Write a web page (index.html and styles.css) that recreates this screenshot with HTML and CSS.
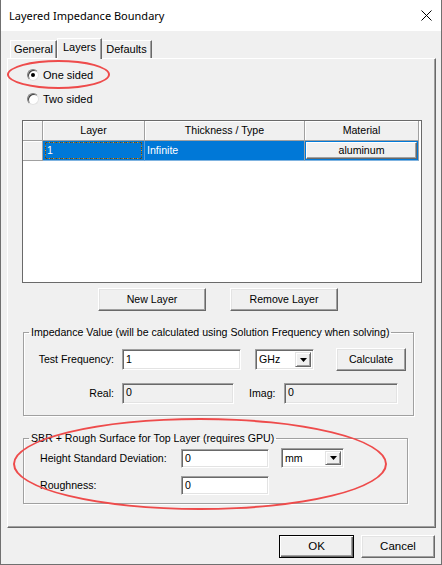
FILE: index.html
```html
<!DOCTYPE html>
<html>
<head>
<meta charset="utf-8">
<link rel="stylesheet" href="styles.css">
</head>
<body>
<div class="window">
  <div class="titlebar">
    <span class="title">Layered Impedance Boundary</span>
    <svg class="close" width="11" height="11" viewBox="0 0 11 11"><path d="M0.5 0.5 L10.5 10.5 M10.5 0.5 L0.5 10.5" stroke="#000" stroke-width="1" fill="none"/></svg>
  </div>
  <div class="client">
    <div class="tabs">
      <div class="tab t-general">General</div>
      <div class="tab t-layers active">Layers</div>
      <div class="tab t-defaults">Defaults</div>
    </div>
    <div class="panel">
      <div class="radios">
        <div class="radio"><span class="rb checked"></span><span>One sided</span></div>
        <div class="radio"><span class="rb"></span><span>Two sided</span></div>
      </div>
      <div class="grid">
        <div class="grow head">
          <div class="c rh"></div>
          <div class="c col1">Layer</div>
          <div class="c col2">Thickness / Type</div>
          <div class="c col3">Material</div>
        </div>
        <div class="grow sel">
          <div class="c rh"></div>
          <div class="c col1"><span class="focus">1</span></div>
          <div class="c col2">Infinite</div>
          <div class="c col3"><span class="cellbtn">aluminum</span></div>
        </div>
      </div>
      <div class="btnrow">
        <div class="btn b-layer">New Layer</div>
        <div class="btn b-layer">Remove Layer</div>
      </div>
      <fieldset class="group g1">
        <legend>Impedance Value (will be calculated using Solution Frequency when solving)</legend>
        <div class="frow r1">
          <span class="lbl">Test Frequency:</span>
          <div class="edit e-freq">1</div>
          <div class="select s-ghz"><span class="stext">GHz</span><span class="drop"><svg width="7" height="4" viewBox="0 0 7 4"><path d="M0 0 H7 L3.5 4 Z" fill="#000"/></svg></span></div>
          <div class="btn b-calc">Calculate</div>
        </div>
        <div class="frow r2">
          <span class="lbl">Real:</span>
          <div class="edit ro e-real">0</div>
          <span class="lbl2">Imag:</span>
          <div class="edit ro e-imag">0</div>
        </div>
      </fieldset>
      <fieldset class="group g2">
        <legend>SBR + Rough Surface for Top Layer (requires GPU)</legend>
        <div class="frow r3">
          <span class="lbl3">Height Standard Deviation:</span>
          <div class="edit e-small">0</div>
          <div class="select s-mm"><span class="stext">mm</span><span class="drop"><svg width="7" height="4" viewBox="0 0 7 4"><path d="M0 0 H7 L3.5 4 Z" fill="#000"/></svg></span></div>
        </div>
        <div class="frow r4">
          <span class="lbl3">Roughness:</span>
          <div class="edit e-small">0</div>
        </div>
      </fieldset>
      <div class="ellipse el1"></div>
      <div class="ellipse el2"></div>
    </div>
    <div class="footer">
      <div class="btn default b-ok">OK</div>
      <div class="btn b-cancel">Cancel</div>
    </div>
  </div>
</div>
</body>
</html>
```
FILE: styles.css
```css
* { box-sizing: border-box; }
html, body { margin: 0; padding: 0; background: #fff; }
body {
  font-family: "Liberation Sans", Arial, sans-serif;
  font-size: 10.6px;
  line-height: 13px;
  color: #000;
}
.window {
  width: 442px;
  height: 565px;
  border: 1px solid #707070;
  border-top: none;
  display: flex;
  flex-direction: column;
  background: #f0f0f0;
}
.titlebar {
  height: 31px;
  flex: none;
  background: #fff;
  display: flex;
  align-items: center;
  padding-left: 8px;
  padding-right: 9px;
}
.title {
  flex: 1;
  font-family: "Noto Sans", sans-serif;
  font-size: 11px;
  color: #000;
  margin-top: -1px;
}
.close { display: block; }

.client {
  flex: 1;
  display: flex;
  flex-direction: column;
  padding: 7px 5px 0 6px;
}
.tabs {
  display: flex;
  align-items: flex-end;
  height: 20px;
  margin-left: 3px;
  position: relative;
  z-index: 2;
  font-size: 11px;
}
.tab {
  height: 18px;
  background: #f0f0f0;
  border-top: 1px solid #fff;
  border-left: 1px solid #fff;
  border-right: 1px solid #696969;
  box-shadow: inset -1px 0 0 #a0a0a0;
  text-align: center;
  padding-top: 2px;
}
.t-general { width: 47px; }
.t-layers { width: 45px; }
.t-defaults { width: 50px; border-left: none; }
.tab.active {
  height: 21px;
  margin-bottom: -1px;
  padding-top: 2px;
}
.panel {
  height: 470px;
  flex: none;
  position: relative;
  border: 1px solid;
  border-color: #fff #696969 #696969 #fff;
  box-shadow: inset -1px -1px 0 #a0a0a0;
  padding: 0 0 0 14px;
}
.radios {
  padding-top: 8px;
  margin-left: 5px;
  display: flex;
  flex-direction: column;
  gap: 8px;
  font-size: 11px;
}
.radio {
  display: flex;
  align-items: center;
  height: 16px;
  gap: 4px;
}
.rb {
  width: 12px;
  height: 12px;
  border-radius: 50%;
  background: #fff;
  border: 1px solid;
  border-color: #808080 #e3e3e3 #e3e3e3 #808080;
  box-shadow: inset 1px 1px 0 #404040;
  display: flex;
  align-items: center;
  justify-content: center;
}
.rb.checked::after {
  content: "";
  width: 4px;
  height: 4px;
  border-radius: 50%;
  background: #000;
}

.grid {
  margin-top: 13px;
  width: 400px;
  height: 163px;
  border: 1px solid #6a6a6a;
  background: #fff;
}
.grow { display: flex; height: 20px; }
.c {
  height: 20px;
  border-right: 1px solid #a0a0a0;
  border-bottom: 1px solid #a0a0a0;
  white-space: nowrap;
}
.rh { width: 20px; background: #f0f0f0; box-shadow: inset 1px 1px 0 #fff; }
.col1 { width: 102px; }
.col2 { width: 160px; }
.col3 { width: 114px; }
.head .c {
  background: #f0f0f0;
  box-shadow: inset 1px 1px 0 #fff;
  text-align: center;
  padding-top: 3px;
}
.sel .col1, .sel .col2, .sel .col3 {
  background: #0078d7;
  color: #fff;
  border-bottom-color: #7fb3e0;
}
.sel .col1 { padding: 1px 2px; border-right-color: #5a9ad8; }
.sel .col2 { padding: 3px 2px 0 2px; }
.focus {
  display: block;
  height: 17px;
  border: 1px dotted #ff9a00;
  outline: 1px dashed rgba(0,0,0,0.35);
  outline-offset: -1px;
  padding: 1px 0 0 1px;
}
.sel .col3 { padding: 1px 1px 1px 1px; }
.cellbtn {
  display: block;
  height: 17px;
  background: #f0f0f0;
  color: #000;
  text-align: center;
  border: 1px solid;
  border-color: #fff #696969 #696969 #fff;
  box-shadow: inset -1px -1px 0 #a0a0a0;
  padding-top: 1px;
}

.btn {
  height: 23px;
  background: #f0f0f0;
  border: 1px solid;
  border-color: #fff #696969 #696969 #fff;
  box-shadow: inset -1px -1px 0 #a0a0a0, inset 1px 1px 0 #e3e3e3;
  display: flex;
  align-items: center;
  justify-content: center;
}
.btn.default {
  border: 1px solid #000;
  box-shadow: inset 1px 1px 0 #fff, inset -1px -1px 0 #696969, inset -2px -2px 0 #a0a0a0;
}
.footer .btn { font-size: 11.5px; }
.btnrow {
  display: flex;
  gap: 24px;
  margin-top: 5px;
  padding-left: 76px;
}
.b-layer { width: 108px; }

.group {
  margin: 0;
  border: 1px solid #a0a0a0;
  box-shadow: 1px 1px 0 #fff, inset 1px 1px 0 #fff;
  min-width: 0;
}
.group legend {
  padding: 0 2px;
  margin-left: 5px;
  line-height: 13px;
}
.g1 {
  margin-top: 15px;
  margin-left: 1px;
  width: 391px;
  padding: 9px 0 11px 0;
}
.g2 {
  margin-top: 16px;
  margin-left: 1px;
  width: 385px;
  padding: 3px 0 8px 16px;
}
.g2 legend { margin-left: -11px; }
.frow { display: flex; align-items: center; }
.r2 { margin-top: 12px; }
.lbl { width: 90px; text-align: right; margin-right: 8px; }
.lbl2 { margin-left: 15px; width: 35px; }
.lbl3 { width: 141px; }
.edit {
  height: 21px;
  background: #fff;
  border: 1px solid;
  border-color: #a0a0a0 #fff #fff #a0a0a0;
  box-shadow: inset 1px 1px 0 #696969, inset -1px -1px 0 #e3e3e3;
  padding: 3px 0 0 3px;
}
.edit.ro { background: #f0f0f0; padding-top: 2px; }
.e-freq { width: 119px; }
.e-real { width: 112px; }
.e-imag { width: 114px; }
.e-small { width: 88px; height: 19px; padding-top: 2px; }

.select {
  height: 21px;
  background: #fff;
  border: 1px solid;
  border-color: #a0a0a0 #fff #fff #a0a0a0;
  box-shadow: inset 1px 1px 0 #696969, inset -1px -1px 0 #e3e3e3;
  display: flex;
  align-items: center;
  padding: 2px 2px 2px 2px;
}
.stext { flex: 1; padding-left: 1px; }
.drop {
  width: 16px;
  height: 100%;
  background: #f0f0f0;
  border: 1px solid;
  border-color: #e3e3e3 #696969 #696969 #e3e3e3;
  box-shadow: inset 1px 1px 0 #fff, inset -1px -1px 0 #a0a0a0;
  display: flex;
  align-items: center;
  justify-content: center;
}
.drop svg { display: block; }
.s-ghz { width: 59px; margin-left: 14px; }
.b-calc { width: 70px; margin-left: 22px; }
.r4 { margin-top: 8px; }
.s-mm { width: 63px; height: 20px; margin-left: 12px; }

.ellipse {
  position: absolute;
  border: 2px solid #ee4b4b;
  border-radius: 50%;
  pointer-events: none;
}
.el1 { left: -1px; top: 1px; width: 103px; height: 29px; }
.el2 { left: 5px; top: 359px; width: 374px; height: 92px; }

.footer {
  display: flex;
  justify-content: flex-end;
  gap: 7px;
  margin-top: 7px;
  padding-right: 1px;
}
.b-ok { width: 75px; }
.b-cancel { width: 74px; }
```
